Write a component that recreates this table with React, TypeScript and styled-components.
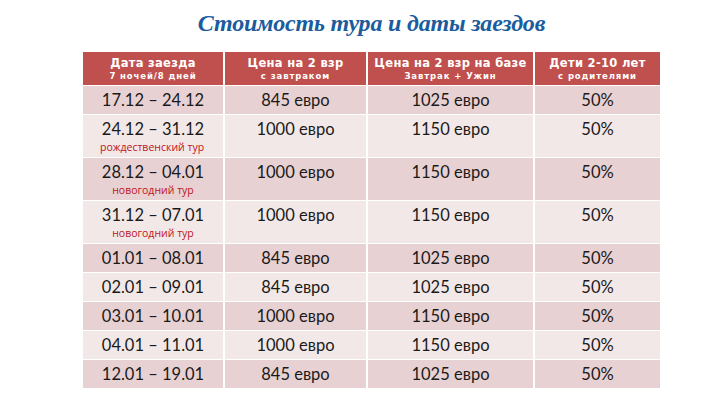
import React from "react";
import styled, { createGlobalStyle } from "styled-components";

const Global = createGlobalStyle`
  html, body { margin: 0; padding: 0; background: #ffffff; }
  body { width: 720px; height: 405px; overflow: hidden; }
`;

const Page = styled.div`
  width: 720px;
  height: 405px;
  box-sizing: border-box;
  padding-left: 83px;
  display: flex;
  flex-direction: column;
  align-items: flex-start;
`;

const Title = styled.h1`
  margin: 0;
  width: 577px;
  height: 52px;
  box-sizing: border-box;
  padding-bottom: 6px;
  display: flex;
  align-items: center;
  justify-content: center;
  font-family: "Liberation Serif", "DejaVu Serif", serif;
  font-style: italic;
  font-weight: 700;
  font-size: 24px;
  color: #1b5c9e;
  letter-spacing: -0.2px;
`;

const Table = styled.div`
  display: grid;
  grid-template-columns: 140px 141px 165px 125px;
  column-gap: 2px;
  row-gap: 1px;
  background: #ffffff;
`;

const HeadCell = styled.div`
  height: 33px;
  background: #c0504d;
  color: #ffffff;
  display: flex;
  flex-direction: column;
  align-items: center;
  justify-content: center;
  font-family: "DejaVu Sans", Verdana, sans-serif;
  font-weight: 700;
`;

const HeadMain = styled.div`
  font-size: 11.5px;
  line-height: 14px;
  letter-spacing: 0.3px;
`;

const HeadSub = styled.div`
  font-size: 8.5px;
  line-height: 11px;
  letter-spacing: 0.9px;
  margin-top: 1px;
`;

const Cell = styled.div<{ $band: boolean; $tall: boolean }>`
  background: ${(p) => (p.$band ? "#e8d1d3" : "#f3e8e8")};
  height: ${(p) => (p.$tall ? "42px" : "28px")};
  box-sizing: border-box;
  padding-top: 3px;
  display: flex;
  flex-direction: column;
  align-items: center;
  font-family: Lato, "Open Sans", sans-serif;
  color: #1a1a1a;
`;

const Main = styled.div`
  font-size: 16.5px;
  line-height: 22px;
  white-space: nowrap;
`;

const Note = styled.div<{ $left?: boolean }>`
  font-family: "Open Sans", Lato, sans-serif;
  font-size: 10.5px;
  line-height: 14px;
  color: #c0141c;
  white-space: nowrap;
  align-self: ${(p) => (p.$left ? "flex-start" : "center")};
  padding-left: ${(p) => (p.$left ? "17px" : "0")};
`;

type Row = { date: string; p1: string; p2: string; kids: string; note?: string; left?: boolean };

const rows: Row[] = [
  { date: "17.12 – 24.12", p1: "845 евро", p2: "1025 евро", kids: "50%" },
  { date: "24.12 – 31.12", p1: "1000 евро", p2: "1150 евро", kids: "50%", note: "рождественский тур", left: true },
  { date: "28.12 – 04.01", p1: "1000 евро", p2: "1150 евро", kids: "50%", note: "новогодний тур" },
  { date: "31.12 – 07.01", p1: "1000 евро", p2: "1150 евро", kids: "50%", note: "новогодний тур" },
  { date: "01.01 – 08.01", p1: "845 евро", p2: "1025 евро", kids: "50%" },
  { date: "02.01 – 09.01", p1: "845 евро", p2: "1025 евро", kids: "50%" },
  { date: "03.01 – 10.01", p1: "1000 евро", p2: "1150 евро", kids: "50%" },
  { date: "04.01 – 11.01", p1: "1000 евро", p2: "1150 евро", kids: "50%" },
  { date: "12.01 – 19.01", p1: "845 евро", p2: "1025 евро", kids: "50%" },
];

const heads = [
  ["Дата заезда", "7 ночей/8 дней"],
  ["Цена на 2 взр", "с завтраком"],
  ["Цена на 2 взр на базе", "Завтрак + Ужин"],
  ["Дети 2-10 лет", "с родителями"],
];

export default function App() {
  return (
    <>
      <Global />
      <Page>
        <Title>Стоимость тура и даты заездов</Title>
        <Table>
          {heads.map(([m, s]) => (
            <HeadCell key={m}>
              <HeadMain>{m}</HeadMain>
              <HeadSub>{s}</HeadSub>
            </HeadCell>
          ))}
          {rows.map((r, i) => {
            const band = i % 2 === 0;
            const tall = !!r.note;
            return (
              <React.Fragment key={r.date}>
                <Cell $band={band} $tall={tall}>
                  <Main>{r.date}</Main>
                  {r.note && <Note $left={r.left}>{r.note}</Note>}
                </Cell>
                <Cell $band={band} $tall={tall}>
                  <Main>{r.p1}</Main>
                </Cell>
                <Cell $band={band} $tall={tall}>
                  <Main>{r.p2}</Main>
                </Cell>
                <Cell $band={band} $tall={tall}>
                  <Main>{r.kids}</Main>
                </Cell>
              </React.Fragment>
            );
          })}
        </Table>
      </Page>
    </>
  );
}
